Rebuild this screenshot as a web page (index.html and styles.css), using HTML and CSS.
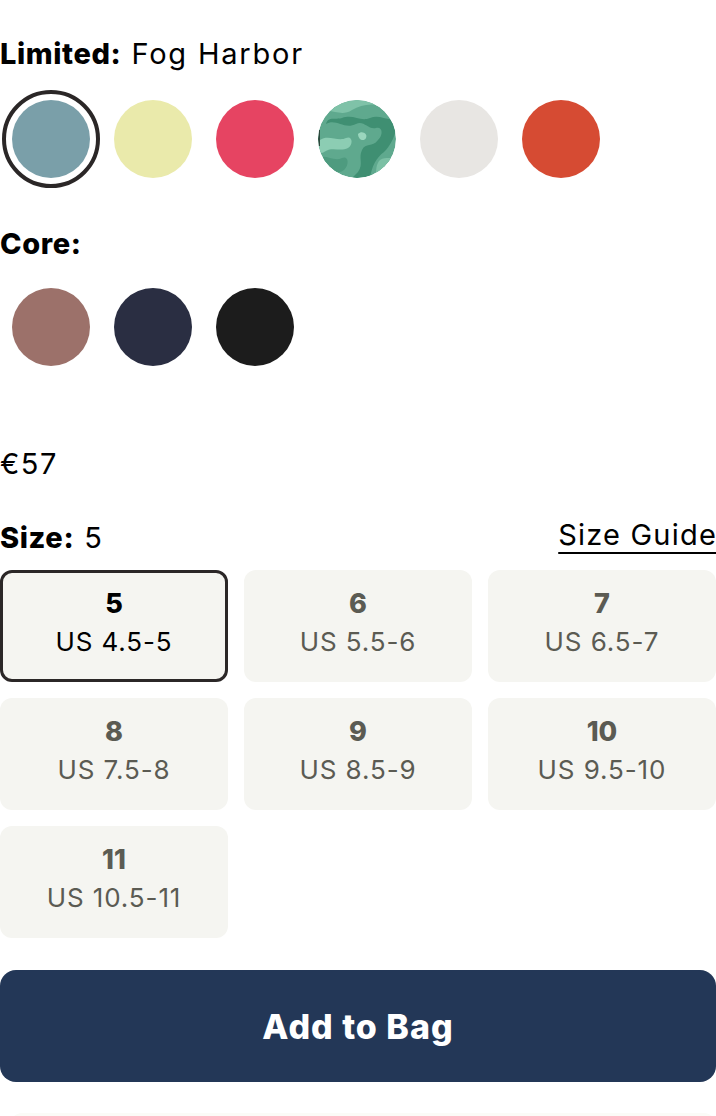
FILE: index.html
```html
<!DOCTYPE html>
<html lang="en">
<head>
<meta charset="utf-8">
<title>Product options</title>
<link rel="stylesheet" href="styles.css">
</head>
<body>
<main class="product">
  <section class="colors">
    <h2 class="label"><b>Limited:</b> Fog Harbor</h2>
    <div class="swatches">
      <button class="swatch is-selected" aria-label="Fog Harbor"><span class="dot fog"></span></button>
      <button class="swatch" aria-label="Lemon"><span class="dot lemon"></span></button>
      <button class="swatch" aria-label="Pink"><span class="dot pink"></span></button>
      <button class="swatch" aria-label="Marble Green">
        <svg class="dot" viewBox="0 0 78 78" aria-hidden="true">
          <defs><clipPath id="round"><circle cx="39" cy="39" r="39"/></clipPath></defs>
          <g clip-path="url(#round)">
            <rect width="78" height="78" fill="#5fa98e"/>
            <path d="M0 14 C12 6 22 18 34 10 C44 4 56 2 70 8 L78 6 L78 0 L0 0Z" fill="#7fc2a8"/>
            <path d="M8 24 C18 18 26 30 38 24 C46 20 50 30 58 28 C64 26 66 34 60 40 C54 48 48 42 44 50 C40 58 46 64 40 72 L34 78 L52 78 C54 66 58 58 66 52 C72 46 76 38 78 30 L78 18 C70 22 62 14 52 18 C42 22 36 14 24 18 C16 20 10 16 8 24Z" fill="#3f8f72"/>
            <path d="M2 40 C10 34 20 42 28 38 C34 35 36 44 30 48 C22 52 14 46 6 52 C2 55 0 50 2 40Z" fill="#8ccdb3"/>
            <path d="M40 34 C44 30 50 34 48 38 C46 42 40 40 40 34Z" fill="#9ad6bd"/>
            <path d="M0 58 C8 54 16 62 24 58 C30 55 32 64 26 70 C18 76 8 70 0 74Z" fill="#4e9b7f"/>
            <path d="M62 60 C68 56 74 60 78 56 L78 78 L58 78 C58 70 58 64 62 60Z" fill="#7cc0a5"/>
            <path d="M0 30 L2 30 L2 46 L0 46Z" fill="#2d4a3e"/>
          </g>
        </svg>
      </button>
      <button class="swatch" aria-label="Cloud"><span class="dot cloud"></span></button>
      <button class="swatch" aria-label="Flame"><span class="dot flame"></span></button>
    </div>
  </section>

  <section class="colors core">
    <h2 class="label"><b>Core:</b></h2>
    <div class="swatches">
      <button class="swatch" aria-label="Mauve"><span class="dot mauve"></span></button>
      <button class="swatch" aria-label="Navy"><span class="dot navy"></span></button>
      <button class="swatch" aria-label="Black"><span class="dot black"></span></button>
    </div>
  </section>

  <p class="price">€57</p>

  <div class="size-head">
    <span class="label"><b>Size:</b> 5</span>
    <a class="guide" href="#">Size Guide</a>
  </div>

  <div class="sizes">
    <button class="size is-selected"><b>5</b><span>US 4.5-5</span></button>
    <button class="size"><b>6</b><span>US 5.5-6</span></button>
    <button class="size"><b>7</b><span>US 6.5-7</span></button>
    <button class="size"><b>8</b><span>US 7.5-8</span></button>
    <button class="size"><b>9</b><span>US 8.5-9</span></button>
    <button class="size"><b>10</b><span>US 9.5-10</span></button>
    <button class="size"><b>11</b><span>US 10.5-11</span></button>
  </div>

  <button class="add">Add to Bag</button>

  <div class="next-panel"></div>
</main>
</body>
</html>
```

FILE: styles.css
```css
* { box-sizing: border-box; }

html, body {
  margin: 0;
  background: #ffffff;
}

body {
  font-family: Inter, "Noto Sans", sans-serif;
  color: #000;
  overflow: hidden;
}

.product {
  width: 716px;
  padding-top: 36px;
}

.label {
  margin: 0;
  font-size: 29px;
  line-height: 36px;
  font-weight: 400;
  letter-spacing: 1.8px;
}

.label b {
  font-weight: 800;
  letter-spacing: 0.6px;
}

.swatches {
  display: flex;
  gap: 4px;
  padding-left: 2px;
  margin-top: 18px;
}

.core { margin-top: 38px; }
.core .swatches { margin-top: 16px; }

.swatch {
  width: 98px;
  height: 98px;
  padding: 0;
  border: 4px solid transparent;
  border-radius: 50%;
  background: none;
  display: flex;
  align-items: center;
  justify-content: center;
  cursor: pointer;
}

.swatch.is-selected { border-color: #2b2727; }

.dot {
  display: block;
  width: 78px;
  height: 78px;
  border-radius: 50%;
}

.fog   { background: #7a9fa9; }
.lemon { background: #eaeaab; }
.pink  { background: #e64462; }
.cloud { background: #e8e6e3; }
.flame { background: #d64b33; }
.mauve { background: #9c716a; }
.navy  { background: #2a2e42; }
.black { background: #1c1c1c; }

.price {
  margin: 70px 0 0;
  font-size: 29px;
  line-height: 36px;
  letter-spacing: 1.5px;
}

.size-head {
  margin-top: 38px;
  display: flex;
  justify-content: space-between;
  align-items: baseline;
}

.guide {
  color: #000;
  font-size: 29px;
  line-height: 36px;
  letter-spacing: 1.2px;
  margin-right: -1px;
  text-decoration: underline;
  text-decoration-thickness: 2px;
  text-underline-offset: 7px;
  position: relative;
  top: -3px;
}

.sizes {
  margin-top: 14px;
  display: grid;
  grid-template-columns: repeat(3, 1fr);
  gap: 16px;
}

.size {
  height: 112px;
  border: 3px solid transparent;
  border-radius: 12px;
  background: #f5f5f1;
  color: #5b5b53;
  font-family: inherit;
  display: flex;
  flex-direction: column;
  align-items: center;
  justify-content: center;
  padding: 0 0 6px;
  gap: 2px;
  cursor: pointer;
}

.size b {
  font-size: 27px;
  line-height: 36px;
  font-weight: 800;
}

.size span {
  font-size: 26px;
  line-height: 36px;
  letter-spacing: 0.9px;
}

.size.is-selected {
  border-color: #2b2727;
  color: #000;
}

.add {
  margin-top: 32px;
  width: 100%;
  height: 112px;
  border: 0;
  border-radius: 16px;
  background: #233757;
  color: #fff;
  font-family: inherit;
  font-size: 34px;
  font-weight: 800;
  letter-spacing: 1px;
  cursor: pointer;
}

.next-panel {
  margin: 31px 0 0 10px;
  height: 40px;
  background: #fbfbf7;
  border-radius: 12px 12px 0 0;
}
```
